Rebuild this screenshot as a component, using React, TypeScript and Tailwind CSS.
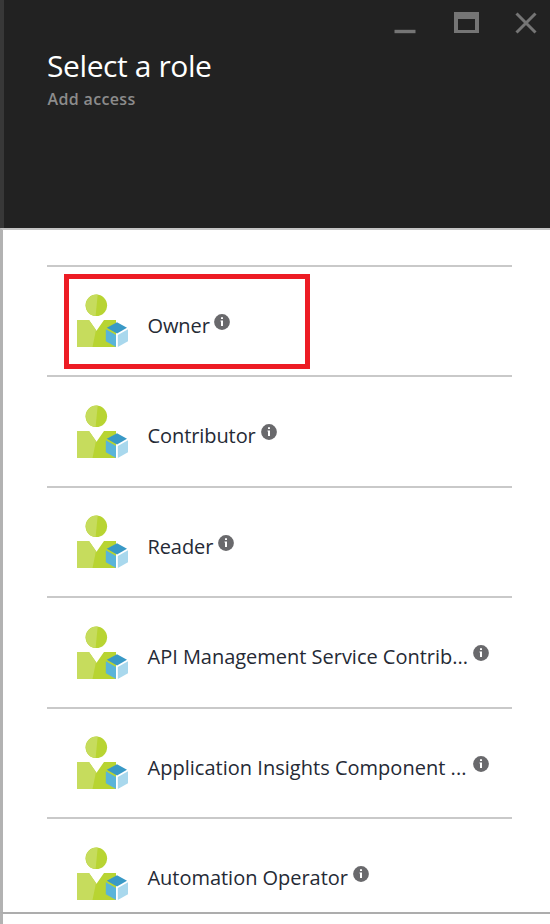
const ROLES = [
  { name: 'Owner', text: 'tracking-[-0.1px]', width: 'w-[61px]', selected: true },
  { name: 'Contributor', text: 'tracking-[-0.08px]', width: 'w-[108px]' },
  { name: 'Reader', text: 'tracking-[-0.1px]', width: 'w-[65px]' },
  { name: 'API Management Service Contrib...', text: 'tracking-[-0.02px]', width: 'w-[320px]' },
  { name: 'Application Insights Component ...', text: 'tracking-[0.02px]', width: 'w-[320px]' },
  { name: 'Automation Operator', text: 'tracking-[-0.03px]', width: 'w-[200px]' },
];

function RoleIcon() {
  return (
    <svg width="52" height="54" viewBox="0 0 52 54" className="mt-[0.2px] block shrink-0">
      <circle cx="19.3" cy="11.3" r="10.8" fill="#b8d432" />
      <path d="M20.7 0.6A10.8 10.8 0 1 0 18.6 22.1Z" fill="#c6dc5d" />
      <path d="M0 26H12L19.5 36.8L27 26H39V53H0Z" fill="#b8d432" />
      <path d="M0 26H12L19 36L15.5 53H0Z" fill="#c6dc5d" />
      <path d="M39 41L51.5 33.5V47.5L40 54L39 53Z" fill="#fff" />
      <path d="M40 28.2L50 33.8L40 39.6L29.8 33.8Z" fill="#3999c6" />
      <path d="M28.8 35.2L39 41V53L28.8 47.2Z" fill="#59b4d9" />
      <path d="M51 35.2L40.8 41V53L51 47.2Z" fill="#a9d8ed" />
    </svg>
  );
}

function InfoIcon() {
  return (
    <svg width="16" height="16" viewBox="0 0 16 16" className="block shrink-0">
      <circle cx="8" cy="8" r="7.9" fill="#69696c" />
      <path d="M7 3.2H9V5H7ZM6.5 6.5H9V12H7V7.5H6.5Z" fill="#fff" />
    </svg>
  );
}

export default function App() {
  return (
    <div className="flex h-[924px] w-[550px] flex-col overflow-hidden bg-white font-['Open_Sans','Noto_Sans',sans-serif]">
      <header className="flex h-[228px] shrink-0 flex-col border-l-4 border-[#383838] bg-[#222222]">
        <div className="flex h-[46px] justify-end pt-[12px] pr-[13px]">
          <svg width="144" height="24" viewBox="0 0 144 24" fill="none" stroke="#757575">
            <path d="M1.5 19.5H22.5" strokeWidth="3.4" />
            <path d="M61 0H86V21H61ZM65 7V18H82V7Z" fill="#757575" stroke="none" fillRule="evenodd" />
            <path d="M123.5 1.5L142.5 20.5M142.5 1.5L123.5 20.5" strokeWidth="3" />
          </svg>
        </div>
        <h1 className="pl-[43px] text-[30px] leading-[40px] tracking-[-0.4px] whitespace-nowrap text-white">Select a role</h1>
        <p className="pt-[2px] pl-[43.5px] text-[16px] leading-[22px] font-semibold tracking-[0.35px] text-[#8c8c8c]">Add access</p>
      </header>
      <main className="flex h-[684px] shrink-0 flex-col border-t-2 border-l-[3px] border-t-[#c4c4c4] border-l-[#b2b2b2] pt-[34.9px] pr-[38px] pl-[44px]">
        {ROLES.map((role) => (
          <div key={role.name} className="relative flex h-[110.5px] shrink-0 border-t-2 border-[#c9c9c9] pt-[27px] pl-[30px]">
            {role.selected && (
              <div className="absolute top-[7px] left-[17px] h-[95px] w-[246px] border-5 border-[#ed1c24]" />
            )}
            <RoleIcon />
            <span className={`${role.text} ${role.width} ml-[18.5px] pt-[17px] text-[20px] leading-[30px] whitespace-nowrap text-[#252a35]`}>{role.name}</span>
            <span className="ml-[5.5px] pt-[20px]"><InfoIcon /></span>
          </div>
        ))}
      </main>
      <footer className="relative flex h-[12px] shrink-0 border-t-2 border-l-[3px] border-t-[#adadad] border-l-[#b2b2b2] bg-white" />
    </div>
  );
}
